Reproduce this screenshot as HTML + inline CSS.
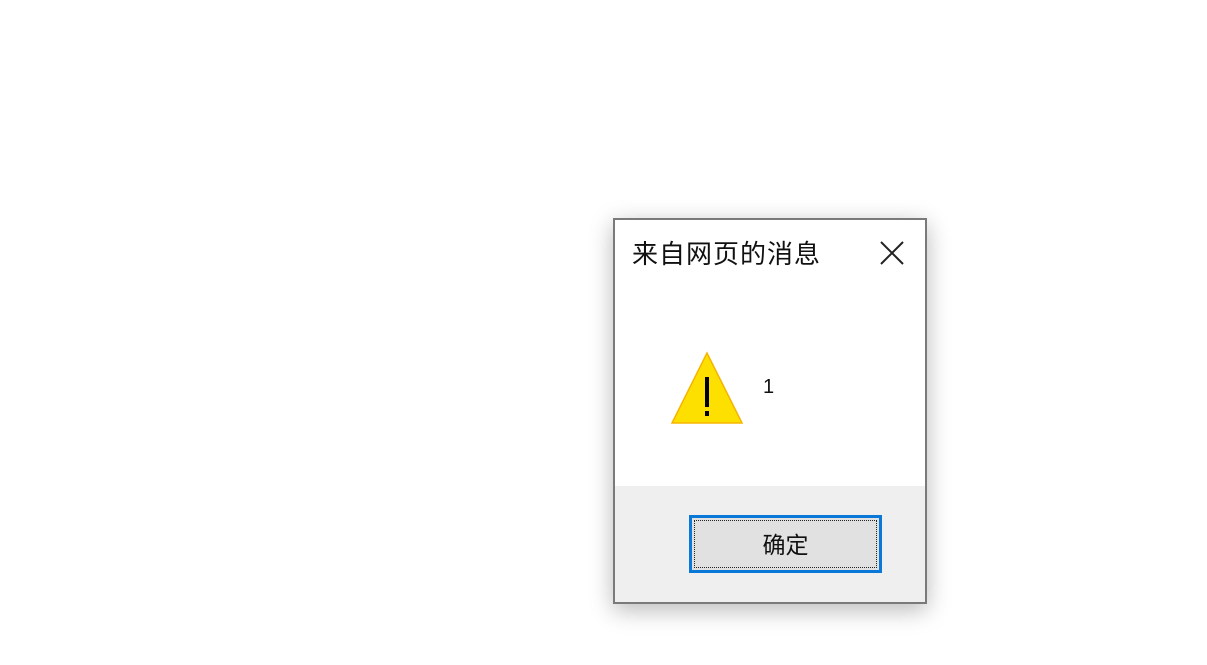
<!DOCTYPE html>
<html><head><meta charset="utf-8"><style>
body{margin:0;width:1207px;height:665px;background:#fff;position:relative;overflow:hidden;font-family:"Liberation Sans","Noto Sans CJK SC",sans-serif;}
.dlg{position:absolute;left:613px;top:218px;width:310px;height:382px;border:2px solid #7a7a7a;background:#fff;box-shadow:0 6px 22px rgba(0,0,0,0.28);}
.title{position:absolute;left:17px;top:18px;font-size:26px;color:#111;line-height:32px;letter-spacing:1px;}
.foot{position:absolute;left:0;top:266px;width:310px;height:116px;background:#efefef;}
.btn{position:absolute;left:74px;top:29px;width:193px;height:58px;border:3px solid #0a78d7;background:#e1e1e1;box-sizing:border-box;}
.btn .in{position:absolute;left:2px;top:2px;right:2px;bottom:2px;border:1px dotted #222;font-size:23px;text-align:center;line-height:48px;color:#111;}
.msg{position:absolute;left:148px;top:156px;font-size:20px;color:#111;}
</style></head><body>
<div class="dlg">
<div class="title">来自网页的消息</div>
<svg style="position:absolute;left:263px;top:19px" width="28" height="28" viewBox="0 0 28 28"><path d="M3 3L25 25M25 3L3 25" stroke="#222" stroke-width="2"/></svg>
<svg style="position:absolute;left:55px;top:131px" width="76" height="74" viewBox="0 0 76 74"><path d="M37 2L2 72H72Z" fill="#fde000" stroke="#f5b500" stroke-width="1.5"/><rect x="35" y="26" width="4" height="30" fill="#000"/><rect x="35" y="60" width="4" height="5" fill="#000"/></svg>
<div class="msg">1</div>
<div class="foot"><div class="btn"><div class="in">确定</div></div></div>
</div>
</body></html>
